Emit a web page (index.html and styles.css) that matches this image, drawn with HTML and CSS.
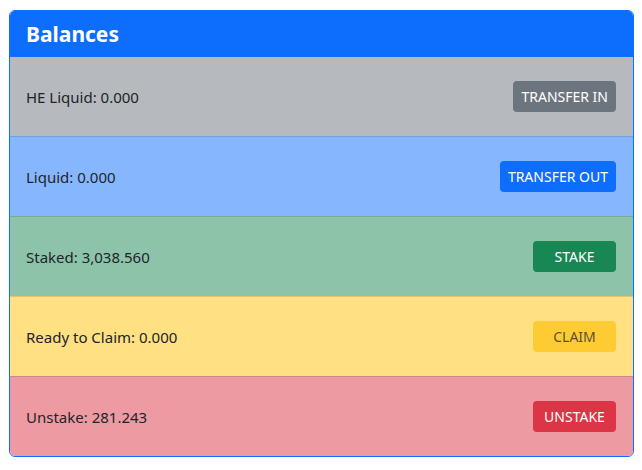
FILE: index.html
```html
<!DOCTYPE html>
<html lang="en">
<head>
    <meta charset="UTF-8">
    <meta name="viewport" content="width=device-width, initial-scale=1.0">
    <title>Balances</title>
    <link rel="stylesheet" href="styles.css">
</head>
<body>
    <div class="card">
        <div class="card-header">
            <h3>Balances</h3>
        </div>
        <ul class="list">
            <li class="item bg-secondary">
                <span>HE Liquid: 0.000</span>
                <button class="btn btn-secondary">Transfer In</button>
            </li>
            <li class="item bg-primary">
                <span>Liquid: 0.000</span>
                <button class="btn btn-primary">Transfer Out</button>
            </li>
            <li class="item bg-success">
                <span>Staked: 3,038.560</span>
                <button class="btn btn-success">Stake</button>
            </li>
            <li class="item bg-warning">
                <span>Ready to Claim: 0.000</span>
                <button class="btn btn-warning" disabled>Claim</button>
            </li>
            <li class="item bg-danger">
                <span>Unstake: 281.243</span>
                <button class="btn btn-danger">Unstake</button>
            </li>
        </ul>
    </div>
</body>
</html>
```

FILE: styles.css
```css
body {
    margin: 0;
    padding: 10px 8px 0 9px;
    font-family: "Noto Sans", "Open Sans", sans-serif;
    font-size: 15px;
    color: #212529;
    background-color: #fff;
}

.card {
    border: 1px solid #0d6efd;
    border-radius: 6px;
    overflow: hidden;
}

.card-header {
    background-color: #0d6efd;
    color: #fff;
    height: 46px;
    padding: 0 16px;
    display: flex;
    align-items: center;
}

.card-header h3 {
    margin: 0;
    font-size: 21px;
    font-weight: 700;
}

.list {
    list-style: none;
    margin: 0;
    padding: 0;
}

.item {
    display: flex;
    justify-content: space-between;
    align-items: center;
    height: 79px;
    padding: 0 17px 0 16px;
    border-top: 1px solid rgba(0, 0, 0, 0.125);
}

.item:first-child {
    border-top: none;
}

.bg-secondary { background-color: #b6babe; }
.bg-primary   { background-color: #86b7fe; }
.bg-success   { background-color: #8cc3a9; }
.bg-warning   { background-color: #ffe083; }
.bg-danger    { background-color: #ed9aa2; }

.btn {
    font-family: inherit;
    font-size: 14px;
    text-transform: uppercase;
    min-width: 83px;
    padding: 0 8px;
    height: 31px;
    border: none;
    border-radius: 4px;
    color: #fff;
    cursor: pointer;
}

.btn-secondary { background-color: #6c757d; }
.btn-primary   { background-color: #0d6efd; }
.btn-success   { background-color: #198754; }
.btn-danger    { background-color: #dc3545; }

.btn-warning {
    background-color: #ffc107;
    color: #000;
}

.btn:disabled {
    opacity: 0.65;
    cursor: default;
}
```
